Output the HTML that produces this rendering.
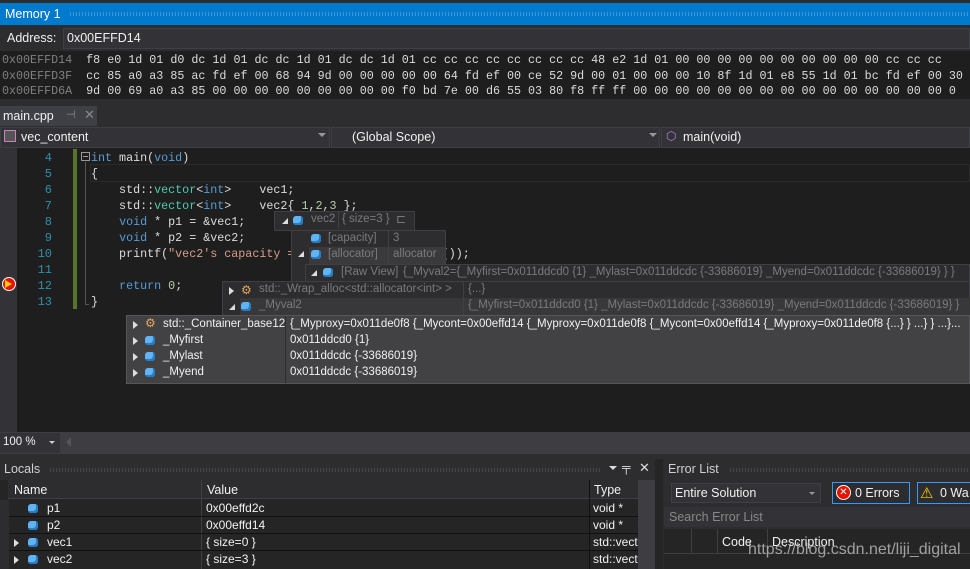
<!DOCTYPE html>
<html><head><meta charset="utf-8"><style>
*{margin:0;padding:0;box-sizing:border-box}
body{width:970px;height:569px;overflow:hidden;background:#2d2d30;font-family:"Liberation Sans",sans-serif;font-size:12px;color:#f1f1f1;position:relative}
.a{position:absolute;white-space:pre}
.m{font-family:"Liberation Mono",monospace}
.hex{font-size:11.7px;color:#dcdcdc}
.ad{color:#808080}
.code{font-family:"Liberation Mono",monospace;font-size:11.7px;color:#dcdcdc}
.kw{color:#569cd6}.ty{color:#4ec9b0}.st{color:#d69d85}.nu{color:#b5cea8}
.ln{color:#2b91af;font-family:"Liberation Mono",monospace;font-size:12px;text-align:right;width:30px}
.cube{position:absolute;width:10px;height:9px;background:#5eb4f4;border-radius:3px;box-shadow:inset -2px -2px 0 #2b7bc0}
.tri{position:absolute;width:0;height:0;border-left:6px solid transparent;border-bottom:6px solid #ddd}
.ex{position:absolute;width:0;height:0;border-top:4px solid transparent;border-bottom:4px solid transparent;border-left:5px solid #ddd}
.dim{color:#7a7a7a}
.t{font-size:11.5px}
</style></head><body>
<div class="a" style="left:0;top:0;width:970px;height:3px;background:#2d2d30"></div>
<div class="a" style="left:0;top:3px;width:970px;height:22px;background:#007acc"></div>
<div class="a" style="left:5px;top:7px;font-size:12.5px;color:#fff">Memory 1</div>
<div class="a" style="left:70px;top:12px;width:898px;height:4px;background:repeating-linear-gradient(90deg,#3d95d6 0 1px,transparent 1px 3px)"></div>
<div class="a" style="left:0;top:25px;width:970px;height:26px;background:#2d2d30"></div>
<div class="a" style="left:7px;top:31px;font-size:12.5px">Address:</div>
<div class="a" style="left:63px;top:28px;width:907px;height:21px;background:#333337;border:1px solid #3f3f46"></div>
<div class="a" style="left:67px;top:31px;font-size:12.5px">0x00EFFD14</div>
<div class="a" style="left:0;top:51px;width:970px;height:48px;background:#1e1e1e"></div>
<div class="a m hex" style="left:2px;top:53px;line-height:15.6px"><span class="ad">0x00EFFD14</span>  f8 e0 1d 01 d0 dc 1d 01 dc dc 1d 01 dc dc 1d 01 cc cc cc cc cc cc cc cc 48 e2 1d 01 00 00 00 00 00 00 00 00 00 00 cc cc cc
<span class="ad">0x00EFFD3F</span>  cc 85 a0 a3 85 ac fd ef 00 68 94 9d 00 00 00 00 00 64 fd ef 00 ce 52 9d 00 01 00 00 00 10 8f 1d 01 e8 55 1d 01 bc fd ef 00 30 5
<span class="ad">0x00EFFD6A</span>  9d 00 69 a0 a3 85 00 00 00 00 00 00 00 00 00 f0 bd 7e 00 d6 55 03 80 f8 ff ff 00 00 00 00 00 00 00 00 00 00 00 00 00 00 00 0</div>
<div class="a" style="left:0;top:106px;width:97px;height:20px;background:#3f3f46"></div>
<div class="a" style="left:3px;top:109px;font-size:12.5px">main.cpp</div>
<div class="a" style="left:66px;top:108px;color:#888;font-size:11px">⊣</div>
<div class="a" style="left:84px;top:107px;color:#888;font-size:13px">✕</div>
<div class="a" style="left:0;top:126px;width:970px;height:22px;background:#2d2d30"></div>
<div class="a" style="left:0;top:127px;width:330px;height:21px;background:#333337;border:1px solid #3f3f46"></div>
<div class="a" style="left:4px;top:130px;width:12px;height:12px;border:1px solid #c586c0;background:#555"></div>
<div class="a" style="left:21px;top:130px;font-size:12.5px">vec_content</div>
<div class="a" style="left:318px;top:133px;border-left:4px solid transparent;border-right:4px solid transparent;border-top:4px solid #999;width:0;height:0"></div>
<div class="a" style="left:331px;top:127px;width:329px;height:21px;background:#333337;border:1px solid #3f3f46"></div>
<div class="a" style="left:352px;top:130px;font-size:12.5px">(Global Scope)</div>
<div class="a" style="left:649px;top:133px;border-left:4px solid transparent;border-right:4px solid transparent;border-top:4px solid #999;width:0;height:0"></div>
<div class="a" style="left:661px;top:127px;width:309px;height:21px;background:#333337;border:1px solid #3f3f46"></div>
<div class="a" style="left:666px;top:129px;color:#b180d7;font-size:12px">⬡</div>
<div class="a" style="left:683px;top:130px;font-size:12.5px">main(void)</div>
<div class="a" style="left:0;top:148px;width:970px;height:284px;background:#1e1e1e"></div>
<div class="a" style="left:0;top:148px;width:17px;height:284px;background:#333337"></div>
<div class="a" style="left:2px;top:277px;width:14px;height:14px;border-radius:50%;background:#e51400;border:1px solid #fff"></div>
<div class="a" style="left:5px;top:280px;width:0;height:0;border-top:4px solid transparent;border-bottom:4px solid transparent;border-left:7px solid #ffcc00"></div>
<div class="a" style="left:73px;top:149px;width:4px;height:160px;background:#57752a"></div>
<div class="a" style="left:81px;top:152px;width:9px;height:9px;border:1px solid #999"></div>
<div class="a" style="left:83px;top:156px;width:5px;height:1px;background:#999"></div>
<div class="a" style="left:85px;top:162px;width:1px;height:142px;background:#555"></div>
<div class="a" style="left:85px;top:304px;width:4px;height:1px;background:#555"></div>
<div class="a" style="left:90px;top:164px;width:880px;height:18px;border:1px solid #2a2a2a"></div>
<div class="a ln" style="left:22px;top:150px;line-height:16px">4
5
6
7
8
9
10
11
12
13</div>
<div class="a code" style="left:91px;top:150px;line-height:16px"><span class="kw">int</span> main(<span class="kw">void</span>)
{
    std::<span class="ty">vector</span>&lt;<span class="kw">int</span>&gt;    vec1;
    std::<span class="ty">vector</span>&lt;<span class="kw">int</span>&gt;    vec2{ <span class="nu">1</span>,<span class="nu">2</span>,<span class="nu">3</span> };
    <span class="kw">void</span> * p1 = &amp;vec1;
    <span class="kw">void</span> * p2 = &amp;vec2;
    printf(<span class="st">"vec2's capacity = %d\n"</span>, vec2.capacity());

    <span class="kw">return</span> <span class="nu">0</span>;
}</div>
<div class="a" style="left:274px;top:211px;width:141px;height:20px;background:#2d2d30;border:1px solid #3f3f46"></div>
<div class="tri" style="left:282px;top:218px"></div>
<div class="cube" style="left:293px;top:216px"></div>
<div class="a dim t" style="left:311px;top:213px">vec2</div>
<div class="a" style="left:338px;top:212px;width:1px;height:17px;background:#3f3f46"></div>
<div class="a dim t" style="left:342px;top:213px">{ size=3 }</div>
<div class="a dim" style="left:396px;top:212px">⊏</div>
<div class="a" style="left:291px;top:230px;width:155px;height:52px;background:#2d2d30;border:1px solid #3f3f46"></div>
<div class="a" style="left:309px;top:247px;width:136px;height:17px;background:#3a3a3d"></div>
<div class="cube" style="left:311px;top:234px"></div>
<div class="a dim t" style="left:328px;top:232px">[capacity]</div>
<div class="a dim t" style="left:393px;top:232px">3</div>
<div class="tri" style="left:298px;top:251px"></div>
<div class="cube" style="left:311px;top:250px"></div>
<div class="a dim t" style="left:328px;top:248px">[allocator]</div>
<div class="a dim t" style="left:393px;top:248px">allocator</div>
<div class="a" style="left:388px;top:231px;width:1px;height:33px;background:#3f3f46"></div>
<div class="a" style="left:305px;top:264px;width:665px;height:18px;background:#2d2d30;border:1px solid #3f3f46"></div>
<div class="tri" style="left:311px;top:270px"></div>
<div class="cube" style="left:323px;top:268px"></div>
<div class="a dim t" style="left:341px;top:266px">[Raw View]</div>
<div class="a dim t" style="left:403px;top:266px">{_Myval2={_Myfirst=0x011ddcd0 {1} _Mylast=0x011ddcdc {-33686019} _Myend=0x011ddcdc {-33686019} } }</div>
<div class="a" style="left:222px;top:281px;width:748px;height:35px;background:#2d2d30;border:1px solid #3f3f46"></div>
<div class="a" style="left:240px;top:298px;width:730px;height:17px;background:#38383b"></div>
<div class="ex" style="left:229px;top:287px"></div>
<div class="a" style="left:241px;top:283px;color:#e8a85a;font-size:12px">⚙</div>
<div class="a dim t" style="left:259px;top:283px">std::_Wrap_alloc&lt;std::allocator&lt;int&gt; &gt;</div>
<div class="a" style="left:463px;top:282px;width:1px;height:33px;background:#3f3f46"></div>
<div class="a dim t" style="left:468px;top:283px">{...}</div>
<div class="tri" style="left:229px;top:304px"></div>
<div class="cube" style="left:241px;top:302px"></div>
<div class="a dim t" style="left:259px;top:299px">_Myval2</div>
<div class="a dim t" style="left:468px;top:299px">{_Myfirst=0x011ddcd0 {1} _Mylast=0x011ddcdc {-33686019} _Myend=0x011ddcdc {-33686019} }</div>
<div class="a" style="left:126px;top:315px;width:844px;height:69px;background:#424245;border:1px solid #55555a"></div>
<div class="a" style="left:285px;top:316px;width:1px;height:67px;background:#2d2d30"></div>
<div class="ex" style="left:133px;top:321px"></div>
<div class="a" style="left:145px;top:316px;color:#e8a85a;font-size:12px">⚙</div>
<div class="a t" style="left:163px;top:318px">std::_Container_base12</div>
<div class="a t" style="left:290px;top:318px">{_Myproxy=0x011de0f8 {_Mycont=0x00effd14 {_Myproxy=0x011de0f8 {_Mycont=0x00effd14 {_Myproxy=0x011de0f8 {...} } ...} } ...}...</div>
<div class="ex" style="left:133px;top:337px"></div><div class="cube" style="left:145px;top:336px"></div>
<div class="a t" style="left:163px;top:334px">_Myfirst</div><div class="a t" style="left:290px;top:334px">0x011ddcd0 {1}</div>
<div class="ex" style="left:133px;top:353px"></div><div class="cube" style="left:145px;top:352px"></div>
<div class="a t" style="left:163px;top:350px">_Mylast</div><div class="a t" style="left:290px;top:350px">0x011ddcdc {-33686019}</div>
<div class="ex" style="left:133px;top:369px"></div><div class="cube" style="left:145px;top:368px"></div>
<div class="a t" style="left:163px;top:366px">_Myend</div><div class="a t" style="left:290px;top:366px">0x011ddcdc {-33686019}</div>
<div class="a" style="left:0;top:432px;width:970px;height:22px;background:#3e3e42"></div>
<div class="a" style="left:0;top:433px;width:60px;height:20px;background:#333337"></div>
<div class="a" style="left:3px;top:436px;font-size:11.5px">100 %</div>
<div class="a" style="left:49px;top:441px;border-left:3px solid transparent;border-right:3px solid transparent;border-top:3px solid #ccc;width:0;height:0"></div>
<div class="a" style="left:66px;top:437px;border-top:5px solid transparent;border-bottom:5px solid transparent;border-right:5px solid #555"></div>
<div class="a" style="left:0;top:459px;width:970px;height:110px;background:#2d2d30"></div>
<div class="a" style="left:4px;top:462px;font-size:12.5px;color:#d0d0d0">Locals</div>
<div class="a" style="left:50px;top:468px;width:550px;height:4px;background:repeating-linear-gradient(90deg,#46464a 0 1px,transparent 1px 3px)"></div>
<div class="a" style="left:609px;top:466px;border-left:4px solid transparent;border-right:4px solid transparent;border-top:4px solid #ddd;width:0;height:0"></div>
<div class="a" style="left:622px;top:460px;color:#ddd;font-size:12px">╤</div>
<div class="a" style="left:639px;top:460px;color:#ddd;font-size:13px">✕</div>
<div class="a" style="left:0;top:480px;width:655px;height:89px;background:#252526"></div>
<div class="a" style="left:8px;top:480px;width:630px;height:19px;background:#2d2d30;border-bottom:1px solid #3f3f46"></div>
<div class="a" style="left:14px;top:483px;font-size:12.5px">Name</div>
<div class="a" style="left:201px;top:480px;width:1px;height:89px;background:#3f3f46"></div>
<div class="a" style="left:207px;top:483px;font-size:12.5px">Value</div>
<div class="a" style="left:589px;top:480px;width:1px;height:89px;background:#111"></div>
<div class="a" style="left:594px;top:483px;font-size:12.5px">Type</div>
<div class="a" style="left:638px;top:480px;width:17px;height:89px;background:#3e3e42"></div>
<div class="a" style="left:9px;top:516px;width:629px;height:1px;background:#111"></div>
<div class="a" style="left:9px;top:533px;width:629px;height:1px;background:#111"></div>
<div class="a" style="left:9px;top:550px;width:629px;height:1px;background:#111"></div>
<div class="a" style="left:0;top:500px;width:9px;height:69px;background:#2d2d30"></div>
<div class="cube" style="left:28px;top:504px"></div><div class="a" style="left:47px;top:501px">p1</div><div class="a" style="left:206px;top:501px">0x00effd2c</div><div class="a" style="left:593px;top:501px">void *</div>
<div class="cube" style="left:28px;top:521px"></div><div class="a" style="left:47px;top:518px">p2</div><div class="a" style="left:206px;top:518px">0x00effd14</div><div class="a" style="left:593px;top:518px">void *</div>
<div class="ex" style="left:14px;top:539px"></div><div class="cube" style="left:28px;top:538px"></div><div class="a" style="left:47px;top:535px">vec1</div><div class="a" style="left:206px;top:535px">{ size=0 }</div><div class="a" style="left:593px;top:535px">std::vect</div>
<div class="ex" style="left:14px;top:556px"></div><div class="cube" style="left:28px;top:555px"></div><div class="a" style="left:47px;top:552px">vec2</div><div class="a" style="left:206px;top:552px">{ size=3 }</div><div class="a" style="left:593px;top:552px">std::vect</div>
<div class="a" style="left:655px;top:459px;width:8px;height:110px;background:#252526"></div>
<div class="a" style="left:663px;top:459px;width:307px;height:110px;background:#2d2d30"></div>
<div class="a" style="left:668px;top:462px;font-size:12.5px;color:#d0d0d0">Error List</div>
<div class="a" style="left:730px;top:468px;width:240px;height:4px;background:repeating-linear-gradient(90deg,#46464a 0 1px,transparent 1px 3px)"></div>
<div class="a" style="left:671px;top:483px;width:150px;height:20px;background:#333337;border:1px solid #3f3f46"></div>
<div class="a" style="left:675px;top:486px;font-size:12.5px">Entire Solution</div>
<div class="a" style="left:809px;top:492px;border-left:3px solid transparent;border-right:3px solid transparent;border-top:3px solid #999;width:0;height:0"></div>
<div class="a" style="left:832px;top:482px;width:78px;height:22px;border:1px solid #3399ff"></div>
<div class="a" style="left:836px;top:485px;width:15px;height:15px;border-radius:50%;background:#e51400;border:1px solid #fff;color:#fff;font-size:10px;text-align:center;line-height:13px">✕</div>
<div class="a" style="left:855px;top:486px;font-size:12.5px">0 Errors</div>
<div class="a" style="left:917px;top:482px;width:60px;height:22px;border:1px solid #3399ff"></div>
<div class="a" style="left:920px;top:484px;color:#ffcc00;font-size:15px">⚠</div>
<div class="a" style="left:940px;top:486px;font-size:12.5px">0 Wa</div>
<div class="a" style="left:664px;top:507px;width:306px;height:20px;background:#333337"></div>
<div class="a" style="left:669px;top:510px;font-size:12.5px;color:#888">Search Error List</div>
<div class="a" style="left:664px;top:529px;width:306px;height:40px;background:#252526"></div>
<div class="a" style="left:691px;top:529px;width:1px;height:24px;background:#3f3f46"></div>
<div class="a" style="left:717px;top:529px;width:1px;height:24px;background:#3f3f46"></div>
<div class="a" style="left:767px;top:529px;width:1px;height:24px;background:#3f3f46"></div>
<div class="a" style="left:722px;top:535px;font-size:12.5px">Code</div>
<div class="a" style="left:772px;top:535px;font-size:12.5px">Description</div>
<div class="a" style="left:664px;top:553px;width:306px;height:1px;background:#3f3f46"></div>
<div class="a" style="left:748px;top:541px;font-size:16px;color:rgba(200,200,200,0.75)">https://blog.csdn.net/liji_digital</div>
</body></html>
